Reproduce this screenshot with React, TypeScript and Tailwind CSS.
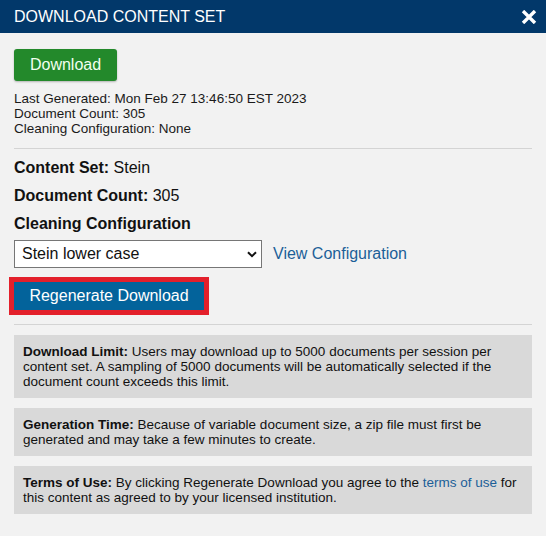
import { useState } from "react";

const notes = [
  {
    label: "Download Limit:",
    body: (
      <>
        Users may download up to 5000 documents per session per content set. A sampling of 5000
        documents will be automatically selected if the document count exceeds this limit.
      </>
    ),
  },
  {
    label: "Generation Time:",
    body: (
      <>
        Because of variable document size, a zip file must first be generated and may take a few
        minutes to create.
      </>
    ),
  },
  {
    label: "Terms of Use:",
    body: (
      <>
        By clicking Regenerate Download you agree to the{" "}
        <a href="#" className="text-[#1c5f98]">
          terms of use
        </a>{" "}
        for this content as agreed to by your licensed institution.
      </>
    ),
  },
];

export default function App() {
  const [config, setConfig] = useState("stein-lower");

  return (
    <div className="h-[536px] w-[546px] bg-[#f2f2f2] font-['Liberation_Sans',Arial,sans-serif] text-[#111]">
      <div className="flex h-[33px] items-center justify-between bg-[#02386a] pl-[14px] pr-[9px]">
        <h2 className="text-[16px] text-white">DOWNLOAD CONTENT SET</h2>
        <button aria-label="Close" className="flex h-[16px] w-[16px] items-center justify-center">
          <svg width="16" height="14" viewBox="0 0 16 14">
            <path d="M2 1 L14 13 M14 1 L2 13" stroke="white" strokeWidth="3.4" strokeLinecap="butt" />
          </svg>
        </button>
      </div>

      <div className="px-[14px] pt-[16px]">
        <button className="h-[32px] w-[103px] rounded-[3px] bg-[#23892b] text-[16px] text-[#f2fff0] shadow-[0_1px_2px_rgba(0,0,0,0.25)]">
          Download
        </button>

        <div className="mt-[10px] text-[13.5px] leading-[15px] text-[#1a1a1a]">
          <p>Last Generated: Mon Feb 27 13:46:50 EST 2023</p>
          <p>Document Count: 305</p>
          <p>Cleaning Configuration: None</p>
        </div>

        <hr className="mt-[12px] border-t border-[#d4d4d4]" />

        <div className="mt-[9px] flex flex-col gap-[8px] text-[16px] leading-[20px]">
          <p>
            <span className="font-bold">Content Set:</span> Stein
          </p>
          <p>
            <span className="font-bold">Document Count:</span> 305
          </p>
          <p className="font-bold">Cleaning Configuration</p>
        </div>

        <div className="mt-[6px] flex items-center gap-[11px]">
          <div className="relative">
            <select
              value={config}
              onChange={(e) => setConfig(e.target.value)}
              className="h-[28px] w-[248px] appearance-none border border-[#767676] bg-white pl-[7px] text-[16px] text-[#111] outline-none"
            >
              <option value="stein-lower">Stein lower case</option>
              <option value="none">None</option>
            </select>
            <svg
              className="pointer-events-none absolute right-[5px] top-[11px]"
              width="10"
              height="7"
              viewBox="0 0 10 7"
            >
              <path d="M1 1.2 L5 5.2 L9 1.2" fill="none" stroke="#111" strokeWidth="2" />
            </svg>
          </div>
          <a href="#" className="text-[16px] text-[#1c5f98]">
            View Configuration
          </a>
        </div>

        <button className="mt-[14px] h-[28px] w-[190px] bg-[#03639b] text-[16px] text-white outline outline-[5px] outline-[#e3202b]">
          Regenerate Download
        </button>

        <hr className="mt-[14px] border-t border-[#d4d4d4]" />

        <div className="mt-[10px] flex flex-col gap-[10px]">
          {notes.map((n) => (
            <div key={n.label} className="bg-[#d9d9d9] py-[9px] pl-[9px] pr-[7px] text-[13.5px] leading-[15px] text-[#111]">
              <span className="font-bold">{n.label}</span> {n.body}
            </div>
          ))}
        </div>
      </div>
    </div>
  );
}
